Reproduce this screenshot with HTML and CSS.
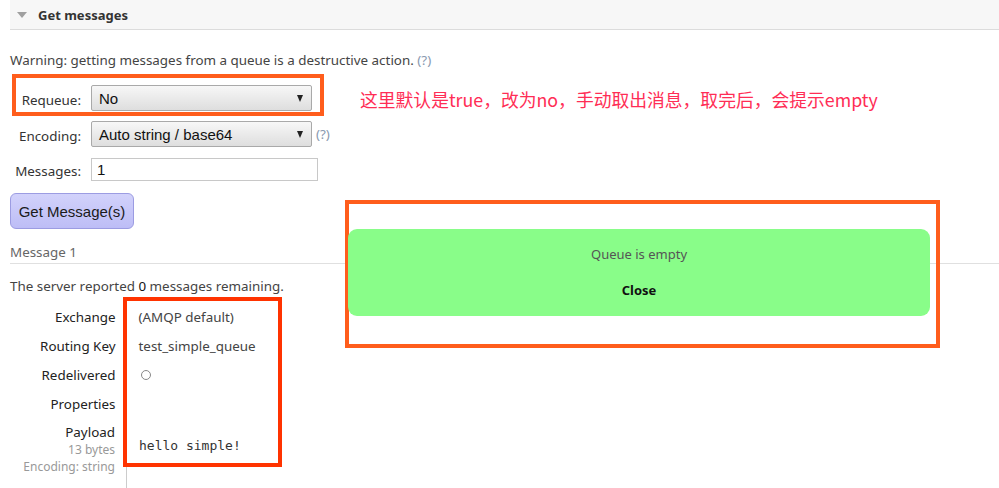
FILE: index.html
```html
<!DOCTYPE html>
<html>
<head>
<meta charset="utf-8">
<link rel="stylesheet" href="styles.css">
</head>
<body>
<div class="page">
  <div class="section-head"><span class="tri"></span>Get messages</div>
  <p class="warning">Warning: getting messages from a queue is a destructive action. <span class="help">(?)</span></p>

  <div class="form">
    <div class="row row-boxed">
      <label class="lbl lbl-boxed">Requeue:</label>
      <div class="select"><span>No</span><span class="arrow"></span></div>
    </div>
    <div class="row row-enc">
      <label class="lbl">Encoding:</label>
      <div class="select"><span>Auto string / base64</span><span class="arrow"></span></div>
      <span class="help help-sel">(?)</span>
    </div>
    <div class="row row-msg">
      <label class="lbl">Messages:</label>
      <div class="input">1</div>
    </div>
    <button class="btn">Get Message(s)</button>
  </div>

  <h3 class="msg-title">Message 1</h3>
  <p class="reported">The server reported <b>0</b> messages remaining.</p>

  <table class="facts">
    <tr><th>Exchange</th><td>(AMQP default)</td></tr>
    <tr><th>Routing Key</th><td>test_simple_queue</td></tr>
    <tr><th>Redelivered</th><td><span class="circle"></span></td></tr>
    <tr><th>Properties</th><td></td></tr>
    <tr class="payload"><th>Payload<sub>13 bytes</sub><sub>Encoding: string</sub></th><td><pre>hello simple!</pre></td></tr>
  </table>

  <div class="note">这里默认是true，改为no，手动取出消息，取完后，会提示empty</div>
  <div class="mark mark-values"></div>
  <div class="mark mark-popup">
    <div class="popup">
      <p class="popup-msg">Queue is empty</p>
      <p class="popup-close">Close</p>
    </div>
  </div>
</div>
</body>
</html>
```
FILE: styles.css
```css
html, body {
  margin: 0;
  padding: 0;
  background: #fff;
}
body {
  font-family: "Noto Sans", "Open Sans", sans-serif;
  font-size: 13.4px;
  color: #484848;
}
.page {
  position: relative;
  height: 488px;
  overflow: hidden;
  padding-left: 10px;
}
.section-head {
  height: 29px;
  background: #f7f7f7;
  border-bottom: 1px solid #dcdcdc;
  display: flex;
  align-items: center;
  padding-left: 7px;
  font-weight: bold;
  color: #333;
  font-size: 13px;
}
.tri {
  width: 0;
  height: 0;
  border-left: 5px solid transparent;
  border-right: 5px solid transparent;
  border-top: 6px solid #a0a0a0;
  margin-right: 11px;
}
.warning {
  margin: 21px 0 0 0;
  line-height: 18px;
  color: #444;
}
.help {
  color: #8a9ab0;
}
.form {
  display: flex;
  flex-direction: column;
  align-items: flex-start;
}
.row {
  display: flex;
  align-items: center;
}
.lbl {
  width: 71px;
  text-align: right;
  margin-right: 10px;
  color: #333;
  padding-top: 3px;
}
.row-boxed {
  margin: 5px 0 0 2px;
  width: 304px;
  height: 28px;
  padding-top: 6px;
  border: 4px solid #ff5d1c;
}
.lbl-boxed {
  width: 65px;
}
.select {
  height: 24px;
  width: 204px;
  border: 1px solid #a9a9a9;
  border-radius: 2px;
  background: linear-gradient(#f7f7f7, #dedede);
  display: flex;
  align-items: center;
  justify-content: space-between;
  padding: 0 8px 0 7px;
  box-sizing: content-box;
  font-family: "Liberation Sans", Arial, sans-serif;
  font-size: 15px;
  color: #111;
}
.arrow {
  width: 0;
  height: 0;
  border-left: 3px solid transparent;
  border-right: 3px solid transparent;
  border-top: 7px solid #222;
}
.row-enc {
  margin-top: 5px;
}
.help-sel {
  margin-left: 4px;
}
.row-msg {
  margin-top: 11px;
}
.input {
  width: 220px;
  height: 21px;
  border: 1px solid #c8c8c8;
  padding-left: 5px;
  font-family: "Liberation Sans", Arial, sans-serif;
  font-size: 15px;
  color: #111;
  line-height: 21px;
}
.btn {
  margin-top: 12px;
  width: 124px;
  height: 36px;
  border: 1px solid #9c9ce2;
  border-radius: 6px;
  background: linear-gradient(#d2d2fb, #bdbdf6);
  font-family: "Liberation Sans", Arial, sans-serif;
  font-size: 15px;
  color: #1a1a1a;
  padding: 0;
}
.msg-title {
  margin: 14px 0 0 0;
  font-weight: normal;
  font-size: 13.4px;
  color: #666;
  line-height: 18px;
  padding-bottom: 2px;
  border-bottom: 1px solid #e0e0e0;
}
.reported {
  margin: 13px 0 0 0;
  line-height: 18px;
  color: #444;
}
.reported b {
  font-weight: normal;
  color: #111;
}
.facts {
  border-collapse: collapse;
  margin-top: 7px;
}
.facts th {
  width: 105px;
  text-align: right;
  font-weight: normal;
  color: #222;
  padding: 0 11px 0 0;
  height: 29px;
  line-height: 18px;
  vertical-align: middle;
}
.facts td {
  padding: 0 0 0 12px;
  color: #444;
  vertical-align: middle;
}
.facts .payload th {
  vertical-align: top;
  padding-top: 5px;
}
.facts sub {
  display: block;
  font-size: 12px;
  color: #999;
  line-height: 17px;
  vertical-align: baseline;
}
.facts .payload td {
  border-left: 1px solid #ccc;
  vertical-align: top;
  padding-top: 20px;
  height: 60px;
}
.facts pre {
  margin: 0;
  font-family: "DejaVu Sans Mono", monospace;
  font-size: 13px;
  color: #333;
}
.circle {
  display: inline-block;
  width: 8px;
  height: 8px;
  border: 1px solid #888;
  border-radius: 50%;
  margin-left: 2px;
}
.note {
  position: absolute;
  left: 360px;
  top: 87px;
  font-family: "Noto Sans CJK SC", "Noto Sans", sans-serif;
  font-size: 17.8px;
  color: #ff2d55;
  line-height: 24px;
}
.mark-values {
  position: absolute;
  left: 123px;
  top: 297px;
  width: 151px;
  height: 162px;
  border: 4px solid #ff3300;
}
.mark-popup {
  position: absolute;
  left: 345px;
  top: 200px;
  width: 587px;
  height: 140px;
  border: 4px solid #ff5d1c;
}
.popup {
  position: absolute;
  left: -1px;
  top: 25px;
  width: 582px;
  height: 87px;
  background: #89fd89;
  border-radius: 9px;
  text-align: center;
}
.popup-msg {
  margin: 16px 0 0 0;
  color: #555;
  font-size: 13px;
  line-height: 18px;
}
.popup-close {
  margin: 18px 0 0 0;
  font-weight: bold;
  font-size: 13px;
  color: #111;
  line-height: 18px;
}
```
